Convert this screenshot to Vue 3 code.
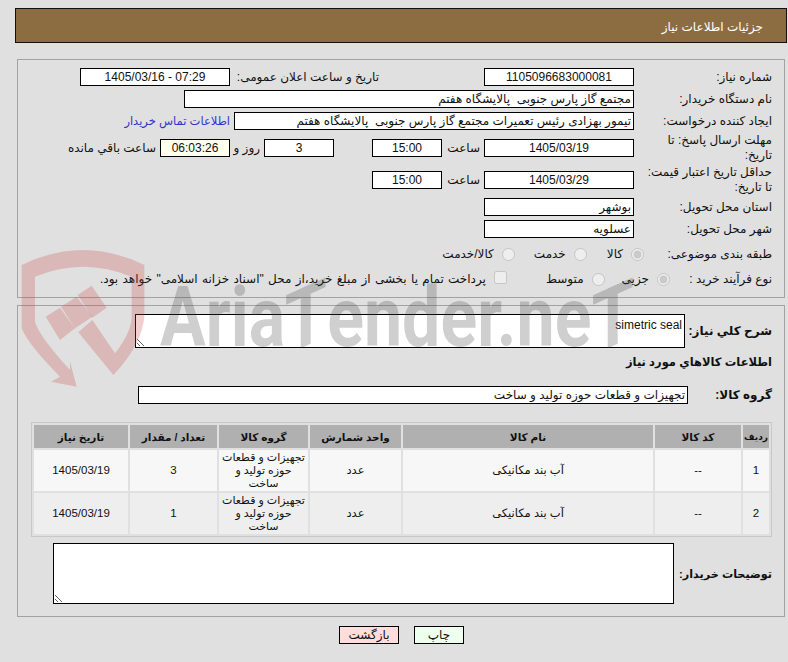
<script setup>
const rows = [
  { no: 1, qty: 3 },
  { no: 2, qty: 1 }
]
</script>

<template>
  <div class="page" dir="rtl">
    <div class="title">جزئیات اطلاعات نیاز</div>

    <section class="panel form">
      <div class="row r22">
        <label class="lbl">شماره نیاز:</label>
        <input class="fld w150 c" readonly value="1105096683000081" />
        <span class="lbl2">تاریخ و ساعت اعلان عمومی:</span>
        <input class="fld w150 c" readonly value="1405/03/16 - 07:29" dir="ltr" />
      </div>
      <div class="row r22">
        <label class="lbl">نام دستگاه خریدار:</label>
        <input class="fld w450" readonly value="مجتمع گاز پارس جنوبی  پالایشگاه هفتم" />
      </div>
      <div class="row r22">
        <label class="lbl">ایجاد کننده درخواست:</label>
        <input class="fld w400" readonly value="تیمور بهزادی رئیس تعمیرات مجتمع گاز پارس جنوبی  پالایشگاه هفتم" />
        <a class="link">اطلاعات تماس خریدار</a>
      </div>
      <div class="row r32">
        <label class="lbl wrap">مهلت ارسال پاسخ: تا تاریخ:</label>
        <input class="fld w150 c" readonly value="1405/03/19" />
        <span class="hour">ساعت</span>
        <input class="fld w70 c" readonly value="15:00" />
        <input class="fld w70 c days" readonly value="3" />
        <span class="and">روز و</span>
        <input class="fld w70 c remain" readonly value="06:03:26" />
        <span class="left">ساعت باقي مانده</span>
      </div>
      <div class="row r32">
        <label class="lbl wrap">حداقل تاریخ اعتبار قیمت: تا تاریخ:</label>
        <input class="fld w150 c" readonly value="1405/03/29" />
        <span class="hour">ساعت</span>
        <input class="fld w70 c" readonly value="15:00" />
      </div>
      <div class="row r22">
        <label class="lbl">استان محل تحویل:</label>
        <input class="fld w150" readonly value="بوشهر" />
      </div>
      <div class="row r22">
        <label class="lbl">شهر محل تحویل:</label>
        <input class="fld w150" readonly value="عسلویه" />
      </div>
      <div class="row r28">
        <label class="lbl lbl-short">طبقه بندی موضوعی:</label>
        <span class="opt o1"><input type="radio" name="kind" checked disabled />کالا</span>
        <span class="opt o2"><input type="radio" name="kind" disabled />خدمت</span>
        <span class="opt o3"><input type="radio" name="kind" disabled />کالا/خدمت</span>
      </div>
      <div class="row r22">
        <label class="lbl lbl-shorter">نوع فرآیند خرید :</label>
        <span class="opt o4"><input type="radio" name="proc" checked disabled />جزیی</span>
        <span class="opt o5"><input type="radio" name="proc" disabled />متوسط</span>
        <span class="opt o6"><input type="checkbox" disabled />پرداخت تمام یا بخشی از مبلغ خرید،از محل "اسناد خزانه اسلامی" خواهد بود.</span>
      </div>
    </section>

    <section class="panel detail">
      <div class="drow desc">
        <label class="bold dl">شرح كلي نیاز:</label>
        <textarea class="area a1" readonly dir="rtl">simetric seal</textarea>
      </div>
      <div class="bold info">اطلاعات كالاهاي مورد نیاز</div>
      <div class="drow grp">
        <label class="bold gl">گروه کالا:</label>
        <input class="fld w550" readonly value="تجهیزات و قطعات حوزه تولید و ساخت" />
      </div>

      <table class="goods">
        <thead>
          <tr>
            <th class="c1">ردیف</th>
            <th class="c2">کد کالا</th>
            <th class="c3">نام کالا</th>
            <th class="c4">واحد شمارش</th>
            <th class="c5">گروه کالا</th>
            <th class="c6">تعداد / مقدار</th>
            <th class="c7">تاریخ نیاز</th>
          </tr>
        </thead>
        <tbody>
          <tr v-for="r in rows" :key="r.no">
            <td>{{ r.no }}</td>
            <td>--</td>
            <td>آب بند مکانیکی</td>
            <td>عدد</td>
            <td class="grp-cell">تجهیزات و قطعات حوزه تولید و ساخت</td>
            <td>{{ r.qty }}</td>
            <td>1405/03/19</td>
          </tr>
        </tbody>
      </table>

      <div class="drow note">
        <label class="bold nl">توضیحات خریدار:</label>
        <textarea class="area a2" readonly dir="rtl"></textarea>
      </div>
    </section>

    <div class="actions">
      <button class="btn print">چاپ</button>
      <button class="btn back">بازگشت</button>
    </div>

    <div class="watermark" dir="ltr" aria-hidden="true">
      <svg class="shield" viewBox="0 0 960 450">
        <path d="M20 60Q204-30 388 60L388 215Q380 300 295 390L190 262 232 225 300 325Q350 260 350 215L350 95Q204 35 60 95L60 230Q70 270 165 375L165 350 185 425 108 410 135 395Q40 300 20 250Z" />
        <path d="M92 215 135 188 180 250 135 285Z" />
        <path d="M138 185 185 155 232 215 180 250Z" />
        <path d="M188 150 230 122 275 188 232 218Z" />
      </svg>
      <span class="mark">Aria<span class="slant">T</span>ender.ne<span class="slant">T</span></span>
    </div>
  </div>
</template>

<style>
html, body { margin: 0; background: #e0e0e0; }
</style>

<style scoped>
.page {
  position: relative;
  width: 788px;
  height: 662px;
  box-sizing: border-box;
  padding: 8px 1px 0 15px;
  background: #e0e0e0;
  color: #111;
  font: 12px/14px "Liberation Sans", "DejaVu Sans", sans-serif;
  overflow: hidden;
}
.title {
  height: 33px;
  border: 1px solid #111;
  background: #8c6d42;
  color: #fff;
  line-height: 37px;
  padding-right: 23px;
}
.panel {
  margin: 16px 2px 0 2px;
  border: 1px solid #a2a2a2;
  padding-right: 12px;
}
.form { padding-top: 6px; padding-bottom: 7px; }
.detail { margin-top: 7px; padding-top: 8px; padding-bottom: 12px; }
.row { display: flex; align-items: center; }
.r22 { height: 22px; }
.r32 { height: 32px; }
.r28 { height: 28px; }
.lbl { width: 138px; flex: none; line-height: 15px; box-sizing: border-box; white-space: nowrap; }
.wrap { padding-left: 10px; white-space: normal; }
.lbl-short { width: 128px; }
.lbl-shorter { width: 102px; }
.fld {
  box-sizing: border-box;
  height: 18px;
  border: 1px solid #000;
  background: #fff;
  color: #111;
  font: inherit;
  padding: 0 2px;
  margin: 0;
  outline: none;
  flex: none;
}
.c { text-align: center; }
.w150 { width: 150px; }
.w450 { width: 450px; }
.w400 { width: 400px; }
.w550 { width: 550px; }
.w70 { width: 70px; }
.lbl2 { margin-right: 105px; width: 149px; flex: none; }
.link { color: #3333cc; margin-right: 4px; font-size: 11.5px; }
.hour { margin: 0 4px; width: 34px; flex: none; }
.days { margin-right: 38px; }
.and { margin: 0 4px 0 8px; width: 22px; flex: none; white-space: nowrap; }
.remain { background: #ffffee; }
.left { margin-right: 4px; }
.opt { display: flex; align-items: center; flex: none; }
.opt input { margin: 0 0 0 8px; width: 13px; height: 13px; flex: none; }
.o2 { margin-right: 20px; }
.o3 { margin-right: 19px; }
.o5 { margin-right: 17px; }
.o6 { margin-right: 39px; word-spacing: 1px; }
.o6 input { margin-top: -4px; }
.drow { display: flex; align-items: center; }
.bold { font-weight: bold; }
.desc { height: 34px; }
.dl { width: 87px; flex: none; }
.area {
  box-sizing: border-box;
  border: 1px solid #000;
  background: #fff;
  color: #111;
  font: inherit;
  padding: 3px 2px;
  margin: 0;
  outline: none;
  flex: none;
  display: block;
}
.a1 { width: 550px; height: 34px; }
.a2 { width: 621px; height: 61px; }
.info { height: 28px; line-height: 28px; font-size: 11.5px; }
.grp { margin-top: 10px; }
.gl { width: 84px; flex: none; }
.goods {
  width: 741px;
  height: 115px;
  margin-top: 18px;
  border: 1px solid #c8c8c8;
  border-spacing: 2px;
  border-collapse: separate;
  table-layout: fixed;
  text-align: center;
  font-size: 11.5px;
}
.goods th {
  height: 23px;
  padding: 0;
  background: #b0b0b0;
  font-weight: bold;
  font-size: 10.5px;
  white-space: nowrap;
}
.goods th.c1 { font-size: 9px; }
.goods td { height: 41px; padding: 0; line-height: 13px; }
.goods tbody tr:nth-child(1) td { background: #f7f7f7; }
.goods tbody tr:nth-child(2) td { background: #eeeeee; }
.goods .grp-cell { padding: 0 3px; font-size: 11px; }
.c1 { width: 26px; }
.c2 { width: 86px; }
.c3 { width: 250px; }
.c4 { width: 91px; }
.c5 { width: 89px; }
.c6 { width: 87px; }
.c7 { width: 94px; }
.note { margin-top: 6px; }
.nl { width: 98px; flex: none; white-space: nowrap; font-size: 11.2px; }
.actions {
  display: flex;
  gap: 15px;
  padding-right: 323px;
  margin-top: 9px;
}
.btn {
  box-sizing: border-box;
  height: 18px;
  border: 1px solid #000;
  font: inherit;
  color: #111;
  padding: 0;
}
.print { width: 50px; background: #efffef; }
.back { width: 60px; background: #ffdddd; }
.watermark {
  position: absolute;
  left: 0;
  top: 0;
  width: 788px;
  height: 662px;
  pointer-events: none;
}
.shield {
  position: absolute;
  left: 15px;
  top: 245px;
  width: 320px;
  height: 150px;
  fill: rgba(200, 64, 64, 0.25);
}
.mark {
  position: absolute;
  left: 160px;
  top: 268px;
  font: bold 84px/100px Roboto, sans-serif;
  color: rgba(64, 64, 64, 0.25);
  transform: scaleX(0.81);
  transform-origin: 0 0;
  white-space: nowrap;
}
.slant {
  display: inline-block;
  transform: skewY(-20deg);
}
</style>
